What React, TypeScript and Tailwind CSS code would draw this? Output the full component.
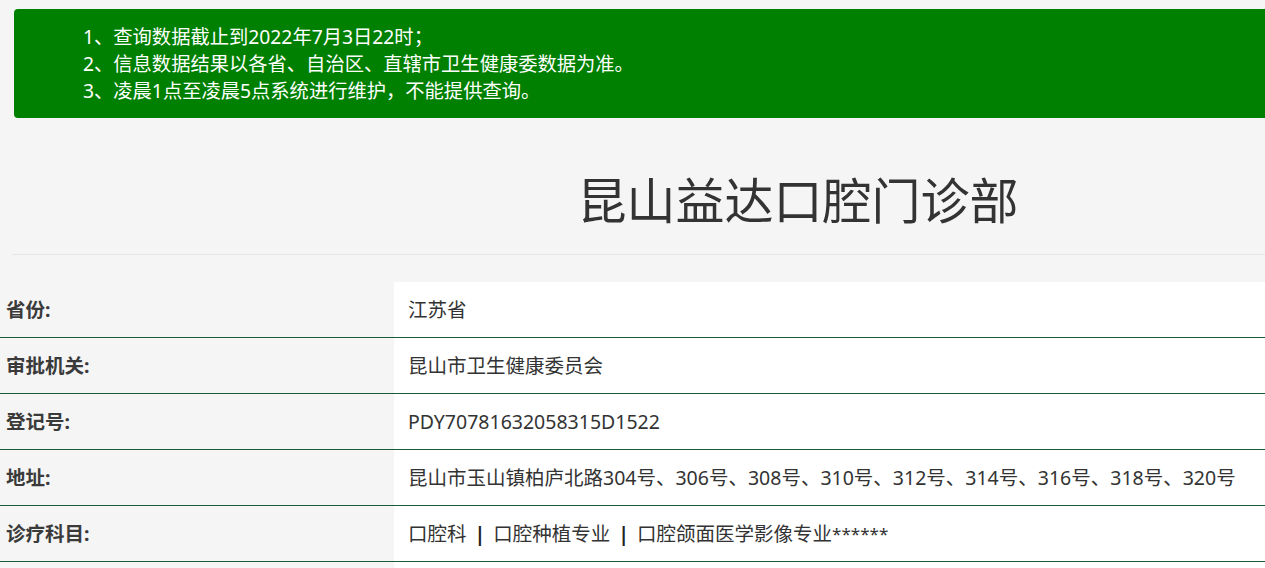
const notices = [
  '1、查询数据截止到2022年7月3日22时；',
  '2、信息数据结果以各省、自治区、直辖市卫生健康委数据为准。',
  '3、凌晨1点至凌晨5点系统进行维护，不能提供查询。',
];

const rows: { label: string; value: React.ReactNode }[] = [
  { label: '省份:', value: '江苏省' },
  { label: '审批机关:', value: '昆山市卫生健康委员会' },
  { label: '登记号:', value: 'PDY70781632058315D1522' },
  { label: '地址:', value: '昆山市玉山镇柏庐北路304号、306号、308号、310号、312号、314号、316号、318号、320号' },
  {
    label: '诊疗科目:',
    value: (
      <>
        口腔科<span className="mx-[8px] font-bold text-[#222]">|</span>口腔种植专业
        <span className="mx-[8px] font-bold text-[#222]">|</span>口腔颌面医学影像专业
        <span className="text-[17px]">******</span>
      </>
    ),
  },
];

export default function App() {
  return (
    <div
      className="h-screen w-full overflow-hidden bg-[#f5f5f5]"
      style={{ fontFamily: '"Noto Sans", "Noto Sans CJK SC", sans-serif' }}
    >
      <div className="w-[1596px] pt-[9px]">
        {/* 提示 */}
        <div className="ml-[14px] rounded-[4px] bg-[#008000] py-[14px] pl-[69px] text-[19.3px] leading-[27px] text-white">
          {notices.map((n) => (
            <div key={n}>{n}</div>
          ))}
        </div>

        {/* 标题 */}
        <div className="mx-3 flex h-[137px] items-center justify-center border-b border-[#e6e6e6] pt-[28px]">
          <h1 className="text-[49px] font-normal leading-none text-[#333]">昆山益达口腔门诊部</h1>
        </div>

        {/* 详情 */}
        <div className="mt-[27px]">
          {rows.map((r) => (
            <div key={r.label} className="flex h-[56px] border-b border-[#1a5c37]">
              <div className="flex w-[394px] items-center pl-[6px] text-[19.5px] font-bold text-[#3a3a3a]">
                {r.label}
              </div>
              <div className="flex flex-1 items-center bg-white pl-[14px] text-[19.5px] text-[#333]">
                {r.value}
              </div>
            </div>
          ))}
          <div className="flex h-[56px]">
            <div className="w-[394px]" />
            <div className="flex-1 bg-white" />
          </div>
        </div>
      </div>
    </div>
  );
}
